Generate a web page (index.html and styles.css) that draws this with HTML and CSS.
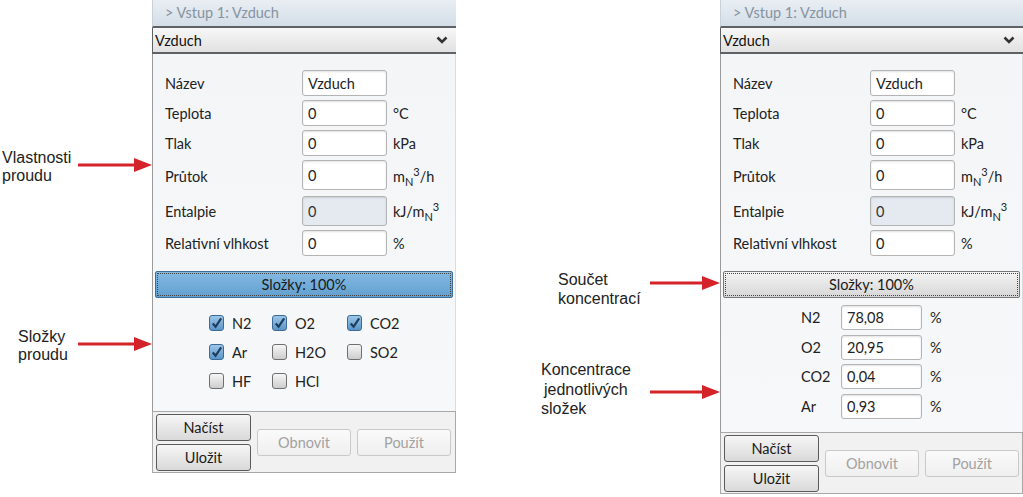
FILE: index.html
```html
<!DOCTYPE html>
<html lang="cs">
<head>
  <meta charset="UTF-8">
  <meta name="viewport" content="width=device-width, initial-scale=1.0">
  <title>Vstup 1: Vzduch</title>
  <link rel="stylesheet" href="styles.css">
</head>
<body>
  <div class="page">

    <!-- Popisky vlevo -->
    <div class="notes notes-left">
      <div class="note note-props">
        <div class="note-text">Vlastnosti<br>proudu</div>
        <svg class="arrow" viewBox="0 0 74 14"><line x1="0" y1="7" x2="60" y2="7"/><polygon points="56,0 74,7 56,14"/></svg>
      </div>
      <div class="note note-parts">
        <div class="note-text">Složky<br>proudu</div>
        <svg class="arrow" viewBox="0 0 74 14"><line x1="0" y1="7" x2="60" y2="7"/><polygon points="56,0 74,7 56,14"/></svg>
      </div>
    </div>

    <!-- Panel se složkami -->
    <div class="panel">
      <div class="panel-title">&gt; Vstup 1: Vzduch</div>
      <div class="panel-select">
        <span>Vzduch</span>
        <svg class="chevron" viewBox="0 0 12 8"><path d="M1.5 1.5 L6 6 L10.5 1.5"/></svg>
      </div>
      <div class="panel-body panel-body-left">
        <div class="fields">
          <span class="field-label">Název</span><input class="field-input" value="Vzduch"><span></span>
          <span class="field-label">Teplota</span><input class="field-input" value="0"><span class="unit">°C</span>
          <span class="field-label">Tlak</span><input class="field-input" value="0"><span class="unit">kPa</span>
          <span class="field-label">Průtok</span><input class="field-input tall" value="0"><span class="unit">m<sub>N</sub><sup>3</sup>/h</span>
          <span class="field-label">Entalpie</span><input class="field-input tall" value="0" readonly disabled><span class="unit">kJ/m<sub>N</sub><sup>3</sup></span>
          <span class="field-label">Relativní vlhkost</span><input class="field-input" value="0"><span class="unit">%</span>
        </div>

        <div class="sum-bar sum-bar-active">Složky: 100%</div>

        <div class="checks">
          <label class="check"><span class="box checked"><svg viewBox="0 0 14 14"><path d="M3 7 L6 10.5 L12 1.5"/></svg></span>N2</label>
          <label class="check"><span class="box checked"><svg viewBox="0 0 14 14"><path d="M3 7 L6 10.5 L12 1.5"/></svg></span>O2</label>
          <label class="check"><span class="box checked"><svg viewBox="0 0 14 14"><path d="M3 7 L6 10.5 L12 1.5"/></svg></span>CO2</label>
          <label class="check"><span class="box checked"><svg viewBox="0 0 14 14"><path d="M3 7 L6 10.5 L12 1.5"/></svg></span>Ar</label>
          <label class="check"><span class="box"></span>H2O</label>
          <label class="check"><span class="box"></span>SO2</label>
          <label class="check"><span class="box"></span>HF</label>
          <label class="check"><span class="box"></span>HCl</label>
        </div>
      </div>
      <div class="button-bar">
        <div class="button-stack">
          <button class="btn">Načíst</button>
          <button class="btn">Uložit</button>
        </div>
        <button class="btn btn-off">Obnovit</button>
        <button class="btn btn-off">Použít</button>
      </div>
    </div>

    <!-- Popisky uprostřed -->
    <div class="notes notes-mid">
      <div class="note note-sum">
        <div class="note-text">Součet<br>koncentrací</div>
        <svg class="arrow arrow-short" viewBox="0 0 70 14"><line x1="0" y1="7" x2="56" y2="7"/><polygon points="52,0 70,7 52,14"/></svg>
      </div>
      <div class="note note-conc">
        <div class="note-text">Koncentrace<br><span class="indent">jednotlivých</span><br>složek</div>
        <svg class="arrow arrow-short" viewBox="0 0 70 14"><line x1="0" y1="7" x2="56" y2="7"/><polygon points="52,0 70,7 52,14"/></svg>
      </div>
    </div>

    <!-- Panel s koncentracemi -->
    <div class="panel panel-right">
      <div class="panel-title">&gt; Vstup 1: Vzduch</div>
      <div class="panel-select">
        <span>Vzduch</span>
        <svg class="chevron" viewBox="0 0 12 8"><path d="M1.5 1.5 L6 6 L10.5 1.5"/></svg>
      </div>
      <div class="panel-body panel-body-right">
        <div class="fields">
          <span class="field-label">Název</span><input class="field-input" value="Vzduch"><span></span>
          <span class="field-label">Teplota</span><input class="field-input" value="0"><span class="unit">°C</span>
          <span class="field-label">Tlak</span><input class="field-input" value="0"><span class="unit">kPa</span>
          <span class="field-label">Průtok</span><input class="field-input tall" value="0"><span class="unit">m<sub>N</sub><sup>3</sup>/h</span>
          <span class="field-label">Entalpie</span><input class="field-input tall" value="0" readonly disabled><span class="unit">kJ/m<sub>N</sub><sup>3</sup></span>
          <span class="field-label">Relativní vlhkost</span><input class="field-input" value="0"><span class="unit">%</span>
        </div>

        <div class="sum-bar">Složky: 100%</div>

        <div class="conc">
          <span class="conc-label">N2</span><input class="field-input conc-input" value="78,08"><span class="unit">%</span>
          <span class="conc-label">O2</span><input class="field-input conc-input" value="20,95"><span class="unit">%</span>
          <span class="conc-label">CO2</span><input class="field-input conc-input" value="0,04"><span class="unit">%</span>
          <span class="conc-label">Ar</span><input class="field-input conc-input" value="0,93"><span class="unit">%</span>
        </div>
      </div>
      <div class="button-bar">
        <div class="button-stack">
          <button class="btn">Načíst</button>
          <button class="btn">Uložit</button>
        </div>
        <button class="btn btn-off">Obnovit</button>
        <button class="btn btn-off">Použít</button>
      </div>
    </div>

  </div>
</body>
</html>
```

FILE: styles.css
```css
/* Základ stránky */
body {
  margin: 0;
  background: #ffffff;
  font-family: Lato, 'Open Sans', sans-serif;
  color: #222;
}

.page {
  display: flex;
  align-items: flex-start;
}

/* Popisky se šipkami */
.notes {
  display: flex;
  flex-direction: column;
  font-family: 'Liberation Sans', Arial, sans-serif;
  font-size: 16px;
  color: #222;
}

.notes-left {
  width: 152px;
}

.notes-mid {
  width: 265px;
  align-items: flex-end;
  padding-top: 270px;
}

.note {
  display: flex;
  align-items: flex-start;
}

.note-text {
  line-height: 18px;
}

.note-props {
  margin-top: 149px;
}

.note-props .note-text {
  width: 76px;
  padding-left: 2px;
}

.note-parts {
  margin-top: 143px;
}

.note-parts .note-text {
  width: 60px;
  padding-left: 18px;
}

.note-sum .note-text {
  width: 92px;
  line-height: 19px;
}

.note-conc {
  margin-top: 52px;
}

.note-conc .note-text {
  width: 109px;
  line-height: 19.5px;
}

.indent {
  padding-left: 3px;
}

.arrow {
  width: 74px;
  height: 14px;
  margin-top: 9px;
  flex-shrink: 0;
}

.arrow-short {
  width: 70px;
  margin-top: 6px;
}

.note-conc .arrow {
  margin-top: 25px;
}

.arrow line {
  stroke: #d5232a;
  stroke-width: 3;
}

.arrow polygon {
  fill: #d5232a;
}

/* Panel */
.panel {
  width: 305px;
  font-size: 14.5px;
}

.panel-right {
  width: 304px;
}

.panel-title {
  height: 26px;
  line-height: 26px;
  padding-left: 12px;
  color: #8793a0;
  background: linear-gradient(#e9eef3, #d4dee8);
  border-left: 1px solid #c8d0d8;
  border-bottom: 2px solid #5e6165;
}

.panel-select {
  height: 24px;
  display: flex;
  align-items: center;
  justify-content: space-between;
  padding: 0 8px 0 2px;
  background: linear-gradient(#f7f7f7, #e1e1e1);
  border-left: 1px solid #5e6165;
  border-bottom: 2px solid #5e6165;
  color: #111;
}

.chevron {
  width: 12px;
  height: 8px;
}

.chevron path {
  fill: none;
  stroke: #333;
  stroke-width: 2.6;
}

.panel-body {
  background: linear-gradient(#f3f5f7, #f6f8fa);
  border-left: 1px solid #9a9a9a;
  border-right: 1px solid #d8dde2;
  padding-top: 16px;
}

.panel-body-left {
  height: 341px;
}

.panel-body-right {
  height: 362px;
}

/* Vlastnosti proudu */
.fields {
  display: grid;
  grid-template-columns: 137px 85px auto;
  grid-template-rows: 26px 26px 26px 32px 30px 26px;
  row-gap: 4px;
  padding-left: 12px;
  align-items: center;
}

.fields .unit {
  padding-left: 6px;
}

.field-input {
  box-sizing: border-box;
  width: 100%;
  height: 26px;
  padding: 0 5px;
  border: 1px solid #b4b4b4;
  border-radius: 3px;
  background: #ffffff;
  box-shadow: inset 0 1px 2px rgba(0, 0, 0, 0.12);
  font-family: inherit;
  font-size: 14.5px;
  color: #222;
}

.field-input.tall {
  height: 30px;
  align-self: start;
}

.field-input:disabled {
  background: #e4eaef;
  color: #333;
}

.unit sub,
.unit sup {
  font-size: 11px;
  line-height: 0;
}

/* Souhrnný pruh */
.sum-bar {
  margin: 15px 2px 0;
  height: 25px;
  line-height: 25px;
  text-align: center;
  border: 1px solid #777;
  border-radius: 2px;
  background: linear-gradient(#f4f4f4, #d7d7d7);
  outline: 1px dotted #444;
  outline-offset: -3px;
  color: #1a1a1a;
}

.sum-bar-active {
  background: linear-gradient(#84b9e2, #62a0d0);
  border-color: #3b6e99;
}

/* Složky proudu */
.checks {
  display: grid;
  grid-template-columns: 63px 75px auto;
  grid-auto-rows: 16px;
  row-gap: 13px;
  margin-top: 17px;
  padding-left: 56px;
}

.check {
  display: flex;
  align-items: center;
  gap: 8px;
}

.box {
  box-sizing: border-box;
  width: 15px;
  height: 16px;
  border: 1px solid #6f6f6f;
  border-radius: 3px;
  background: linear-gradient(#f6f6f6, #cdcdcd);
  display: flex;
  align-items: center;
  justify-content: center;
}

.box.checked {
  border-color: #3a6a95;
  background: linear-gradient(#9cc6e8, #5a95c8);
}

.box svg {
  width: 13px;
  height: 13px;
}

.box svg path {
  fill: none;
  stroke: #1f3d5c;
  stroke-width: 2.4;
}

/* Koncentrace */
.conc {
  display: grid;
  grid-template-columns: 40px 81px auto;
  grid-auto-rows: 25px;
  row-gap: 4.5px;
  margin-top: 7px;
  padding-left: 80px;
  align-items: center;
}

.conc .unit {
  padding-left: 8px;
}

.conc-input {
  height: 25px;
}

/* Tlačítka */
.button-bar {
  display: flex;
  align-items: center;
  gap: 6px;
  padding: 2px 3px 1px;
  background: #f1f1f1;
  border: 1px solid #a8a8a8;
}

.button-stack {
  display: flex;
  flex-direction: column;
  gap: 3px;
}

.btn {
  width: 95px;
  height: 27px;
  padding: 0;
  border: 1px solid #5a5a5a;
  border-radius: 3px;
  background: linear-gradient(#f6f6f6, #d9d9d9);
  font-family: inherit;
  font-size: 14.5px;
  color: #1a1a1a;
}

.btn-off {
  width: 94px;
  border-color: #c9c9c9;
  background: linear-gradient(#fafafa, #efefef);
  color: #a2a2a2;
}
```
